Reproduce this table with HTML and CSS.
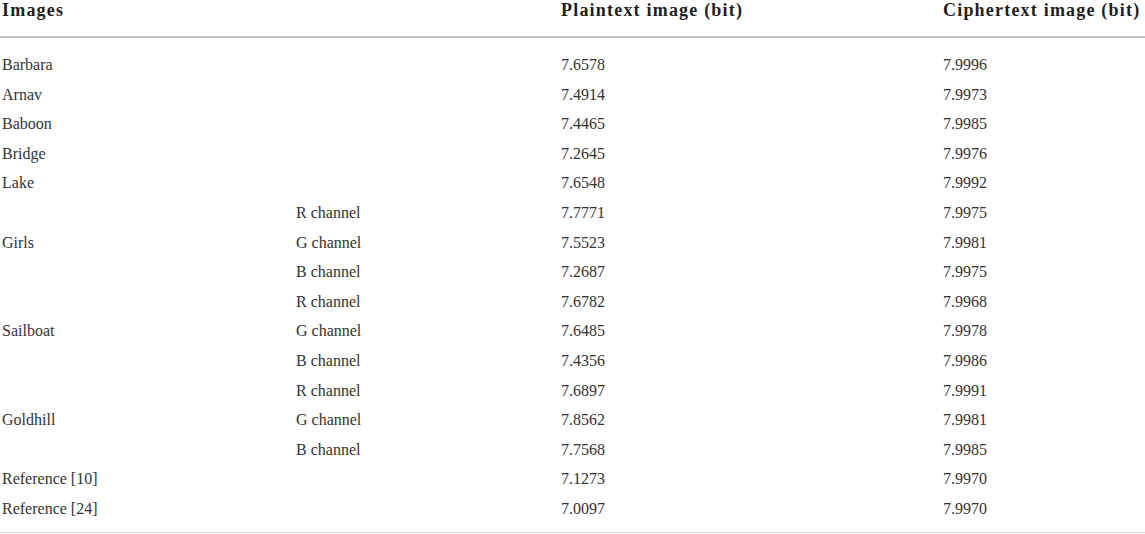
FILE: index.html
```html
<!DOCTYPE html>
<html lang="en">
<head>
<meta charset="utf-8">
<title>Entropy table</title>
<link rel="stylesheet" href="styles.css">
</head>
<body>
<div class="table">
  <div class="head">
    <div class="th c1">Images</div>
    <div class="th"></div>
    <div class="th">Plaintext image (bit)</div>
    <div class="th">Ciphertext image (bit)</div>
  </div>
  <div class="body">
    <div class="td c1">Barbara</div><div class="td"></div><div class="td">7.6578</div><div class="td">7.9996</div>
    <div class="td c1">Arnav</div><div class="td"></div><div class="td">7.4914</div><div class="td">7.9973</div>
    <div class="td c1">Baboon</div><div class="td"></div><div class="td">7.4465</div><div class="td">7.9985</div>
    <div class="td c1">Bridge</div><div class="td"></div><div class="td">7.2645</div><div class="td">7.9976</div>
    <div class="td c1">Lake</div><div class="td"></div><div class="td">7.6548</div><div class="td">7.9992</div>

    <div class="td c1 span3">Girls</div><div class="td">R channel</div><div class="td">7.7771</div><div class="td">7.9975</div>
    <div class="td">G channel</div><div class="td">7.5523</div><div class="td">7.9981</div>
    <div class="td">B channel</div><div class="td">7.2687</div><div class="td">7.9975</div>

    <div class="td c1 span3">Sailboat</div><div class="td">R channel</div><div class="td">7.6782</div><div class="td">7.9968</div>
    <div class="td">G channel</div><div class="td">7.6485</div><div class="td">7.9978</div>
    <div class="td">B channel</div><div class="td">7.4356</div><div class="td">7.9986</div>

    <div class="td c1 span3">Goldhill</div><div class="td">R channel</div><div class="td">7.6897</div><div class="td">7.9991</div>
    <div class="td">G channel</div><div class="td">7.8562</div><div class="td">7.9981</div>
    <div class="td">B channel</div><div class="td">7.7568</div><div class="td">7.9985</div>

    <div class="td c1">Reference [10]</div><div class="td"></div><div class="td">7.1273</div><div class="td">7.9970</div>
    <div class="td c1">Reference [24]</div><div class="td"></div><div class="td">7.0097</div><div class="td">7.9970</div>
  </div>
</div>
</body>
</html>
```
FILE: styles.css
```css
html, body {
  margin: 0;
  padding: 0;
  background: #ffffff;
}

body {
  font-family: "Liberation Serif", "Times New Roman", serif;
  color: #333333;
  width: 1145px;
  overflow: hidden;
}

.table {
  display: flex;
  flex-direction: column;
  width: 1145px;
}

.head,
.body {
  display: grid;
  grid-template-columns: 296px 265px 382px 1fr;
}

.head {
  height: 35px;
  padding-top: 1px;
  border-bottom: 2px solid #c4c4c4;
}

.th {
  font-weight: bold;
  font-size: 18px;
  line-height: 18px;
  letter-spacing: 1.2px;
  color: #1f1f1f;
  white-space: nowrap;
}

.body {
  padding: 12px 0 8px;
  grid-auto-rows: 29.6px;
  border-bottom: 1px solid #dedede;
}

.td {
  font-size: 16px;
  line-height: 29.6px;
  white-space: nowrap;
}

.c1 {
  padding-left: 2px;
}

.span3 {
  grid-row: span 3;
  align-self: center;
}
```
